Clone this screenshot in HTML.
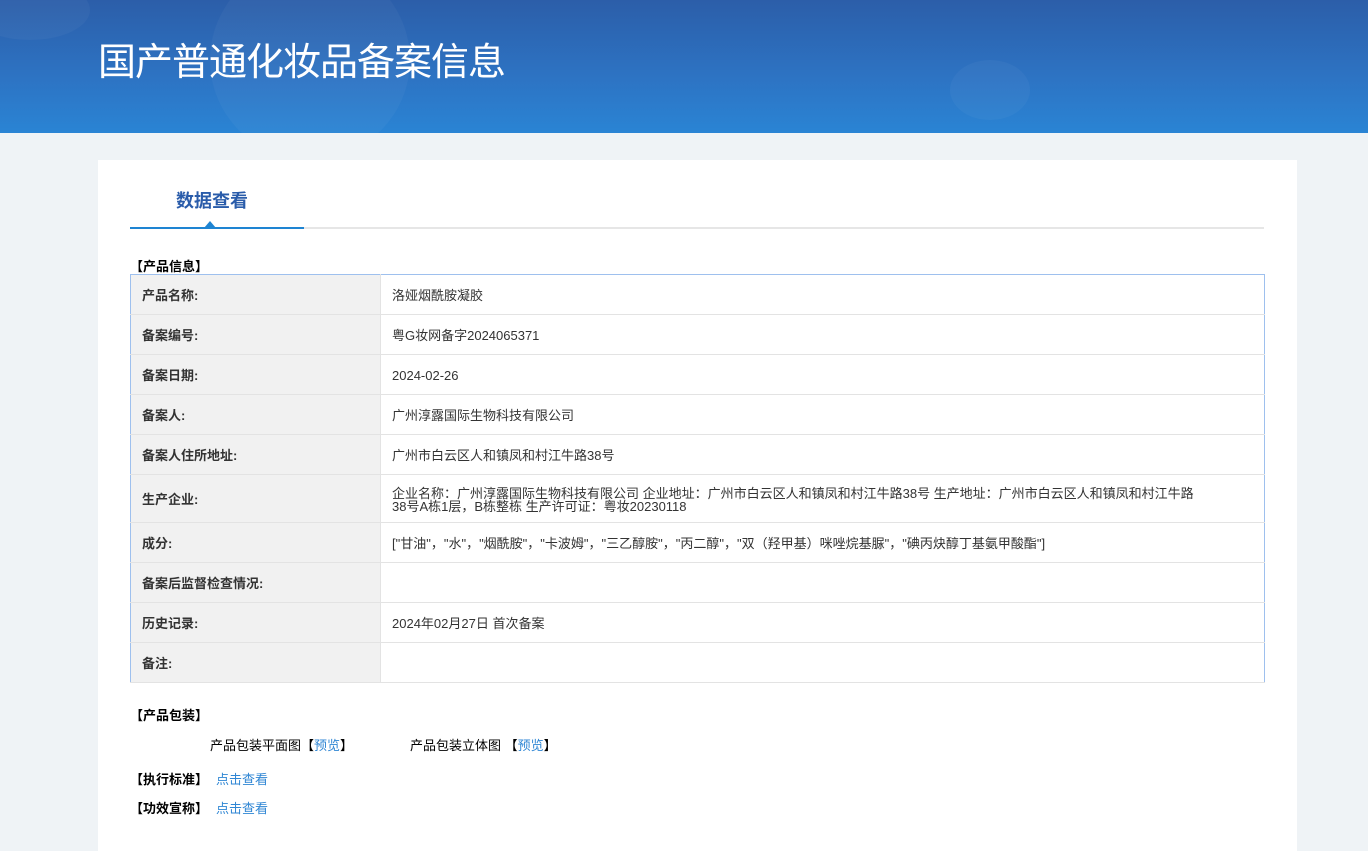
<!DOCTYPE html>
<html><head><meta charset="utf-8"><style>
*{margin:0;padding:0;box-sizing:border-box}
html{width:1368px;height:851px;overflow:hidden}
body{width:1368px;height:851px;overflow:hidden;background:#eff3f6;font-family:"Liberation Sans","Noto Sans CJK SC",sans-serif;font-size:13px;color:#333;position:relative}
.hdr{position:absolute;left:0;top:0;width:1368px;height:133px;background:linear-gradient(180deg,#2c5ea9 0%,#2d74c4 60%,#2a84d4 100%);overflow:hidden}
.hdr h1{position:absolute;left:98px;top:35px;font-size:38px;font-weight:normal;color:#fff;letter-spacing:-1px;font-family:"Noto Sans CJK SC",sans-serif;line-height:48px}
.blob{position:absolute;border-radius:50%;background:rgba(255,255,255,0.035)}
.card{position:absolute;left:98px;top:160px;width:1199px;height:691px;background:#fff}
.tab{position:absolute;left:78px;top:27px;font-size:18px;font-weight:bold;color:#2a5caa}
.wrap{position:absolute;left:98px;top:0;width:1199px;height:851px}
.line{position:absolute;left:32px;top:227px;width:1134px;height:2px;background:#e6e6e6}
.line i{position:absolute;left:0;top:0;width:174px;height:2px;background:#1e84d2}
.tri{position:absolute;left:106px;top:221px;width:0;height:0;border-left:6px solid transparent;border-right:6px solid transparent;border-bottom:7px solid #1e84d2}
.sec{position:absolute;font-weight:bold;color:#000;font-size:13px;white-space:nowrap}
.sec a{font-weight:normal;margin-left:8px}
table{position:absolute;left:32px;width:1135px;border-collapse:collapse;border:1px solid #9ec0ee}
td{border-bottom:1px solid #e3e3e3;height:40px;padding:2px 11px 0;vertical-align:middle;line-height:13px}
td.l{width:250px;background:#f1f1f1;font-weight:bold;border-right:1px solid #e3e3e3;color:#333}
a{color:#2f86d4;text-decoration:none}
</style></head><body>
<div class="hdr">
<div class="blob" style="left:210px;top:-40px;width:200px;height:200px"></div>
<div class="blob" style="left:950px;top:60px;width:80px;height:60px"></div>
<div class="blob" style="left:-30px;top:-20px;width:120px;height:60px"></div>
<h1>国产普通化妆品备案信息</h1>
</div>
<div class="card">
<div class="tab">数据查看</div>
</div>
<div class="wrap">
<div class="line"><i></i></div>
<div class="tri"></div>
<div class="sec" style="left:32px;top:256px">【产品信息】</div>
<table style="top:274px">
<tr><td class="l">产品名称:</td><td>洛娅烟酰胺凝胶</td></tr>
<tr><td class="l">备案编号:</td><td>粤G妆网备字2024065371</td></tr>
<tr><td class="l">备案日期:</td><td>2024-02-26</td></tr>
<tr><td class="l">备案人:</td><td>广州淳露国际生物科技有限公司</td></tr>
<tr><td class="l">备案人住所地址:</td><td>广州市白云区人和镇凤和村江牛路38号</td></tr>
<tr><td class="l" style="height:48px">生产企业:</td><td style="padding-right:60px">企业名称：广州淳露国际生物科技有限公司 企业地址：广州市白云区人和镇凤和村江牛路38号 生产地址：广州市白云区人和镇凤和村江牛路38号A栋1层，B栋整栋 生产许可证：粤妆20230118</td></tr>
<tr><td class="l">成分:</td><td>["甘油"，"水"，"烟酰胺"，"卡波姆"，"三乙醇胺"，"丙二醇"，"双（羟甲基）咪唑烷基脲"，"碘丙炔醇丁基氨甲酸酯"]</td></tr>
<tr><td class="l">备案后监督检查情况:</td><td></td></tr>
<tr><td class="l">历史记录:</td><td>2024年02月27日 首次备案</td></tr>
<tr><td class="l">备注:</td><td></td></tr>
</table>
<div class="sec" style="left:32px;top:705px">【产品包装】</div>
<div style="position:absolute;left:112px;top:735px;color:#000;white-space:nowrap">产品包装平面图【<a>预览</a>】</div>
<div style="position:absolute;left:312px;top:735px;color:#000;white-space:nowrap">产品包装立体图 【<a>预览</a>】</div>
<div class="sec" style="left:32px;top:769px">【执行标准】<a>点击查看</a></div>
<div class="sec" style="left:32px;top:798px">【功效宣称】<a>点击查看</a></div>
</div>
</body></html>
